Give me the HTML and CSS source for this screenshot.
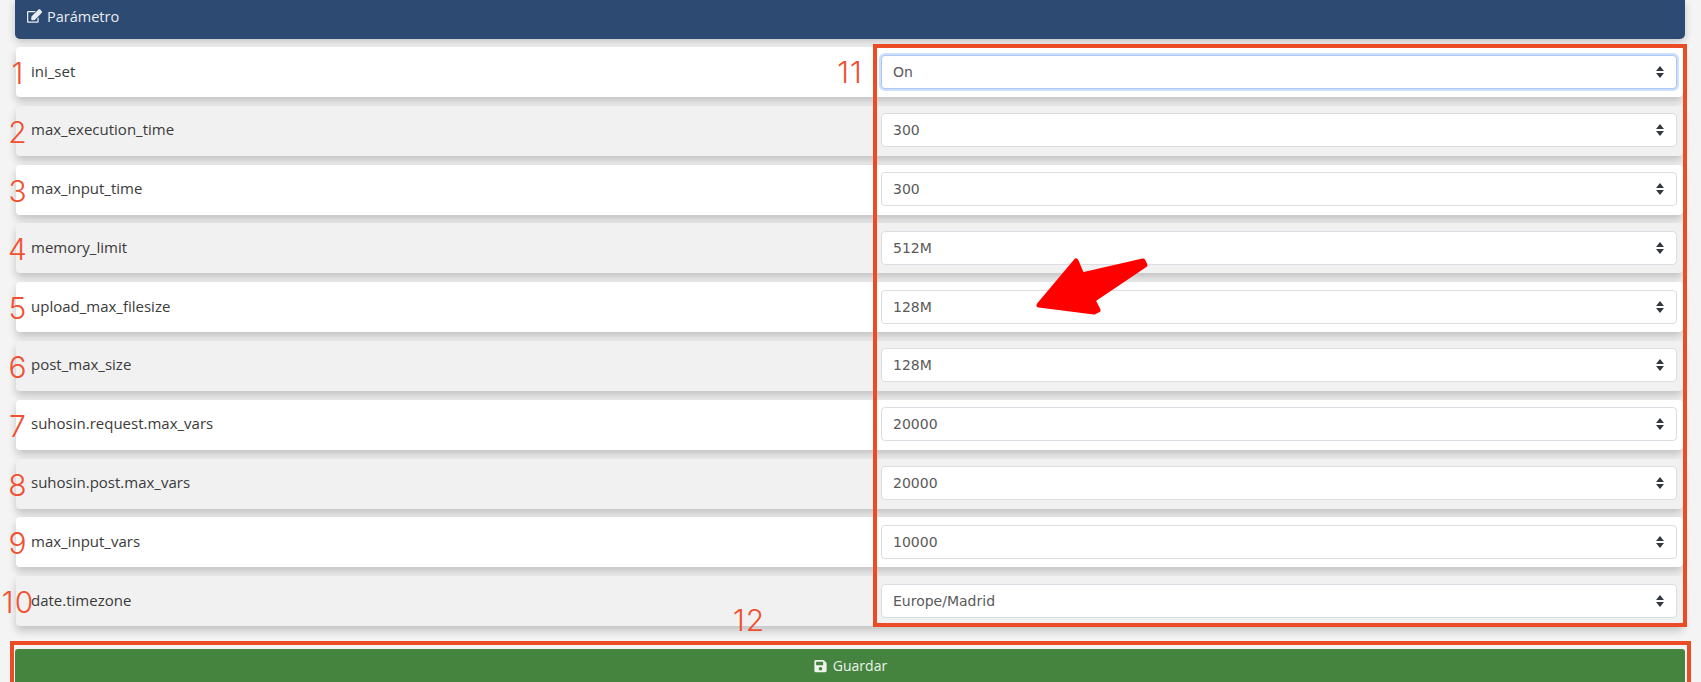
FILE: index.html
```html
<!DOCTYPE html>
<html lang="es">
<head>
<meta charset="utf-8">
<title>Parámetro</title>
<link rel="stylesheet" href="styles.css">
</head>
<body>
<main class="page">
  <header class="panel-head">
    <svg class="ico" viewBox="0 0 576 512"><path fill="currentColor" d="M402.3 344.9l32-32c5-5 13.7-1.5 13.7 5.7V464c0 26.5-21.5 48-48 48H48c-26.500 0-48-21.500-48-48V112c0-26.500 21.500-48 48-48h273.500c7.100 0 10.700 8.600 5.700 13.700l-32 32c-1.500 1.500-3.500 2.300-5.700 2.300H48v352h352V350.500c0-2.100.8-4.100 2.300-5.600zm156.600-201.800L296.300 405.700l-90.400 10c-26.200 2.900-48.500-19.200-45.600-45.600l10-90.400L432.900 17.100c22.900-22.900 59.900-22.900 82.700 0l43.200 43.200c22.900 22.900 22.900 60 .1 82.800z"/></svg>
    <span>Parámetro</span>
  </header>
  <section class="rows">
    <div class="row"><span class="num">1</span><label class="name">ini_set</label><div class="cell"><select class="sel sel-focus"><option>On</option></select></div></div>
    <div class="row alt"><span class="num">2</span><label class="name">max_execution_time</label><div class="cell"><select class="sel"><option>300</option></select></div></div>
    <div class="row"><span class="num">3</span><label class="name">max_input_time</label><div class="cell"><select class="sel"><option>300</option></select></div></div>
    <div class="row alt"><span class="num">4</span><label class="name">memory_limit</label><div class="cell"><select class="sel"><option>512M</option></select></div></div>
    <div class="row"><span class="num">5</span><label class="name">upload_max_filesize</label><div class="cell"><select class="sel"><option>128M</option></select></div></div>
    <div class="row alt"><span class="num">6</span><label class="name">post_max_size</label><div class="cell"><select class="sel"><option>128M</option></select></div></div>
    <div class="row"><span class="num">7</span><label class="name">suhosin.request.max_vars</label><div class="cell"><select class="sel"><option>20000</option></select></div></div>
    <div class="row alt"><span class="num">8</span><label class="name">suhosin.post.max_vars</label><div class="cell"><select class="sel"><option>20000</option></select></div></div>
    <div class="row"><span class="num">9</span><label class="name">max_input_vars</label><div class="cell"><select class="sel"><option>10000</option></select></div></div>
    <div class="row alt"><span class="num">10</span><label class="name">date.timezone</label><div class="cell"><select class="sel"><option>Europe/Madrid</option></select></div></div>
  </section>
  <button class="save" type="button">
    <svg class="ico" viewBox="0 0 448 512"><path fill="currentColor" d="M433.900 129.900l-83.900-83.900A48 48 0 0 0 316.100 32H48C21.500 32 0 53.500 0 80v352c0 26.500 21.500 48 48 48h352c26.500 0 48-21.500 48-48V163.900a48 48 0 0 0-14.100-34zM224 416c-35.300 0-64-28.700-64-64 0-35.300 28.700-64 64-64s64 28.700 64 64c0 35.300-28.700 64-64 64zm96-304.500V212c0 6.600-5.400 12-12 12H76c-6.600 0-12-5.400-12-12V108c0-6.600 5.400-12 12-12h228.500c3.200 0 6.200 1.300 8.500 3.500l3.500 3.500c2.200 2.200 3.500 5.300 3.500 8.500z"/></svg>
    <span>Guardar</span>
  </button>
</main>
<div class="box box-selects"></div>
<div class="box box-save"></div>
<span class="num num-11">11</span>
<span class="num num-12">12</span>
<svg class="big-arrow" viewBox="0 0 120 66"><path d="M3 48 L40 4 L46 18 L107 4 L109 8 L57 43 L62 53 L58 55 Z"/></svg>
</body>
</html>
```
FILE: styles.css
```css
* { box-sizing: border-box; }
html, body { margin: 0; height: 682px; overflow: hidden; }
body { background: #f4f4f4; position: relative; font-family: "Open Sans", "Noto Sans", sans-serif; color: #333; }
.page { display: flex; flex-direction: column; padding: 0 16px 0 15px; }
.panel-head {
  height: 39px; background: #2d4a73; color: #e9edf2; border-radius: 0 0 5px 5px;
  display: flex; align-items: center; gap: 5px; padding: 0 12px 7px; font-size: 14.500px;
  box-shadow: 0 3px 8px rgba(0,0,0,.2); width: 100%;
}
.ico { width: 15px; height: 14px; flex: none; }
.rows { display: flex; flex-direction: column; gap: 8.800px; margin: 8px 2px 0 1px; }
.row {
  height: 50px; display: grid; grid-template-columns: 865px 1fr; align-items: center; position: relative;
  background: #fff; border-radius: 4px; box-shadow: 0 5px 8px rgba(0,0,0,.2);
}
.row.alt { background: #f1f1f1; }
.name { padding: 0 0 3px 15px; font-size: 15px; color: #3a3a3a; position: relative; z-index: 4; }
.cell { padding: 0 6px 1px 0; }
.sel {
  width: 100%; height: 34px; display: block; appearance: none; -webkit-appearance: none;
  border: 1px solid #dcdde3; border-radius: 4px; padding: 0 11px; color: #5a5a5a; font: 14px "DejaVu Sans", sans-serif;
  background: #fff url("data:image/svg+xml,%3Csvg xmlns='http://www.w3.org/2000/svg' width='8' height='12'%3E%3Cpath fill='%23343a40' d='M4 0l4 5H0zM4 12L0 7h8z'/%3E%3C/svg%3E") no-repeat right 12px center;
}
.sel-focus { border-color: #a9c8f5; box-shadow: 0 0 0 2px #cfe0fb; }
.save {
  height: 34px; margin: 22.800px 0 0; width: 1670px; border: 0; border-radius: 3px 3px 0 0; background: #44843f; color: #eef3ed;
  display: flex; align-items: center; justify-content: center; gap: 5px; font: 14px "Open Sans", sans-serif;
}
.num {
  position: absolute; left: -15px; top: 11px; width: 34px; text-align: center; letter-spacing: 1px;
  font: 300 30px/30px Inter, "Liberation Sans", sans-serif; color: #f0502f; z-index: 3;
}
.num-11 { left: 833px; top: 57px; }
.num-12 { left: 732px; top: 605px; }
.box { position: absolute; border: 4.500px solid #ec4c25; z-index: 2; }
.box-selects { left: 873px; top: 44px; width: 814px; height: 583px; }
.box-save { left: 10px; top: 641px; width: 1681px; height: 60px; }
.big-arrow { position: absolute; left: 1036px; top: 257px; width: 120px; height: 66px; z-index: 2; }
.big-arrow path { fill: #f00; stroke: #f00; stroke-width: 5; stroke-linejoin: round; }
```
